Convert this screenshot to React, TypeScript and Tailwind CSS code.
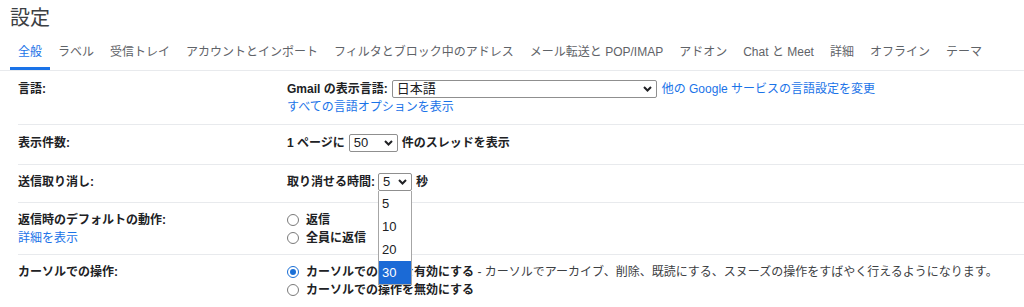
import { ReactNode } from 'react';

const font = { fontFamily: '"Liberation Sans", "Noto Sans CJK JP", sans-serif' };

const tabs = [
  '全般',
  'ラベル',
  '受信トレイ',
  'アカウントとインポート',
  'フィルタとブロック中のアドレス',
  'メール転送と POP/IMAP',
  'アドオン',
  'Chat と Meet',
  '詳細',
  'オフライン',
  'テーマ',
];

function Chevron() {
  return (
    <svg width="9" height="6" viewBox="0 0 9 6" className="shrink-0">
      <polyline points="1,1 4.5,4.5 8,1" fill="none" stroke="#202124" strokeWidth="2" />
    </svg>
  );
}

function FakeSelect({ value, className }: { value: string; className: string }) {
  return (
    <span
      className={`inline-flex items-center justify-between h-[18px] border border-[#8f8f8f] rounded-[2px] bg-white pl-[4px] pr-[4px] font-normal text-[13px] text-[#202124] ${className}`}
    >
      <span className="leading-[16px]">{value}</span>
      <Chevron />
    </span>
  );
}

function Radio({ checked }: { checked?: boolean }) {
  if (checked) {
    return (
      <span className="w-[12px] h-[12px] rounded-full border-[1.5px] border-[#1a6fd6] flex items-center justify-center shrink-0">
        <span className="w-[6px] h-[6px] rounded-full bg-[#1a6fd6]" />
      </span>
    );
  }
  return <span className="w-[12px] h-[12px] rounded-full border border-[#7a7a7a] bg-white shrink-0" />;
}

function Row({ label, sub, children, className }: { label: string; sub?: string; children: ReactNode; className: string }) {
  return (
    <div className={`flex ${className}`}>
      <div className="w-[269px] shrink-0">
        <div className="h-[18px] leading-[18px] font-bold text-[12px] text-[#202124]">{label}</div>
        {sub && <div className="h-[18px] leading-[18px] text-[12px] text-[#1a73e8]">{sub}</div>}
      </div>
      <div className="flex-1">{children}</div>
    </div>
  );
}

export default function App() {
  return (
    <div className="w-[1024px] h-[307px] bg-white overflow-hidden relative" style={font}>
      {/* タイトル */}
      <h1 className="h-[37px] pl-[10px] pt-[5px] text-[20px] leading-[26px] text-[#3c4043]">設定</h1>

      {/* タブ */}
      <div className="flex h-[34px] pl-[10px] border-b border-[#e8eaed]">
        {tabs.map((t, i) => (
          <div
            key={t}
            className={`flex items-center px-[8px] text-[12px] border-b-[3px] ${
              i === 0 ? 'border-[#1a73e8] text-[#1a73e8]' : 'border-transparent text-[#5f6368]'
            }`}
          >
            {t}
          </div>
        ))}
      </div>

      {/* 設定行 */}
      <div className="ml-[18px] text-[12px] text-[#202124]">
        <Row label="言語:" className="pt-[9px] pb-[8px] border-b border-[#e8eaed]">
          <div className="flex items-center gap-[4px] h-[18px]">
            <span className="font-bold">Gmail の表示言語:</span>
            <FakeSelect value="日本語" className="w-[265px]" />
            <span className="text-[#1a73e8] ml-[1px]">他の Google サービスの言語設定を変更</span>
          </div>
          <div className="h-[18px] leading-[18px] text-[#1a73e8]">すべての言語オプションを表示</div>
        </Row>

        <Row label="表示件数:" className="pt-[9px] pb-[12px] border-b border-[#e8eaed]">
          <div className="flex items-center gap-[4px] h-[18px] font-bold">
            <span>1 ページに</span>
            <FakeSelect value="50" className="w-[49px]" />
            <span>件のスレッドを表示</span>
          </div>
        </Row>

        <Row label="送信取り消し:" className="pt-[8px] pb-[11px] border-b border-[#e8eaed]">
          <div className="flex items-center gap-[3px] h-[18px] font-bold relative">
            <span>取り消せる時間:</span>
            <span className="relative">
              <FakeSelect value="5" className="w-[34px]" />
              {/* 開いたドロップダウン */}
              <div className="absolute left-0 top-[18px] w-[34px] z-10 bg-white border border-t-0 border-[#a6a6a6] pt-[1px] font-normal text-[13px]">
                {['5', '10', '20', '30'].map((v) => (
                  <div
                    key={v}
                    className={`h-[23px] leading-[23px] pl-[3px] ${
                      v === '30' ? 'bg-[#1b6ad6] text-white' : 'text-[#202124]'
                    }`}
                  >
                    {v}
                  </div>
                ))}
              </div>
            </span>
            <span className="ml-[1px]">秒</span>
          </div>
        </Row>

        <Row label="返信時のデフォルトの動作:" sub="詳細を表示" className="pt-[8px] pb-[7px] border-b border-[#e8eaed]">
          <div className="flex items-center gap-[7px] h-[18px] font-bold">
            <Radio />
            <span>返信</span>
          </div>
          <div className="flex items-center gap-[7px] h-[18px] font-bold">
            <Radio />
            <span>全員に返信</span>
          </div>
        </Row>

        <Row label="カーソルでの操作:" className="pt-[8px] pb-[8px]">
          <div className="flex items-center gap-[7px] h-[18px] whitespace-nowrap">
            <Radio checked />
            <span>
              <b>カーソルでの操作を有効にする</b>
              <span className="text-[#3c4043]"> - カーソルでアーカイブ、削除、既読にする、スヌーズの操作をすばやく行えるようになります。</span>
            </span>
          </div>
          <div className="flex items-center gap-[7px] h-[18px] font-bold">
            <Radio />
            <span>カーソルでの操作を無効にする</span>
          </div>
        </Row>
      </div>
    </div>
  );
}
